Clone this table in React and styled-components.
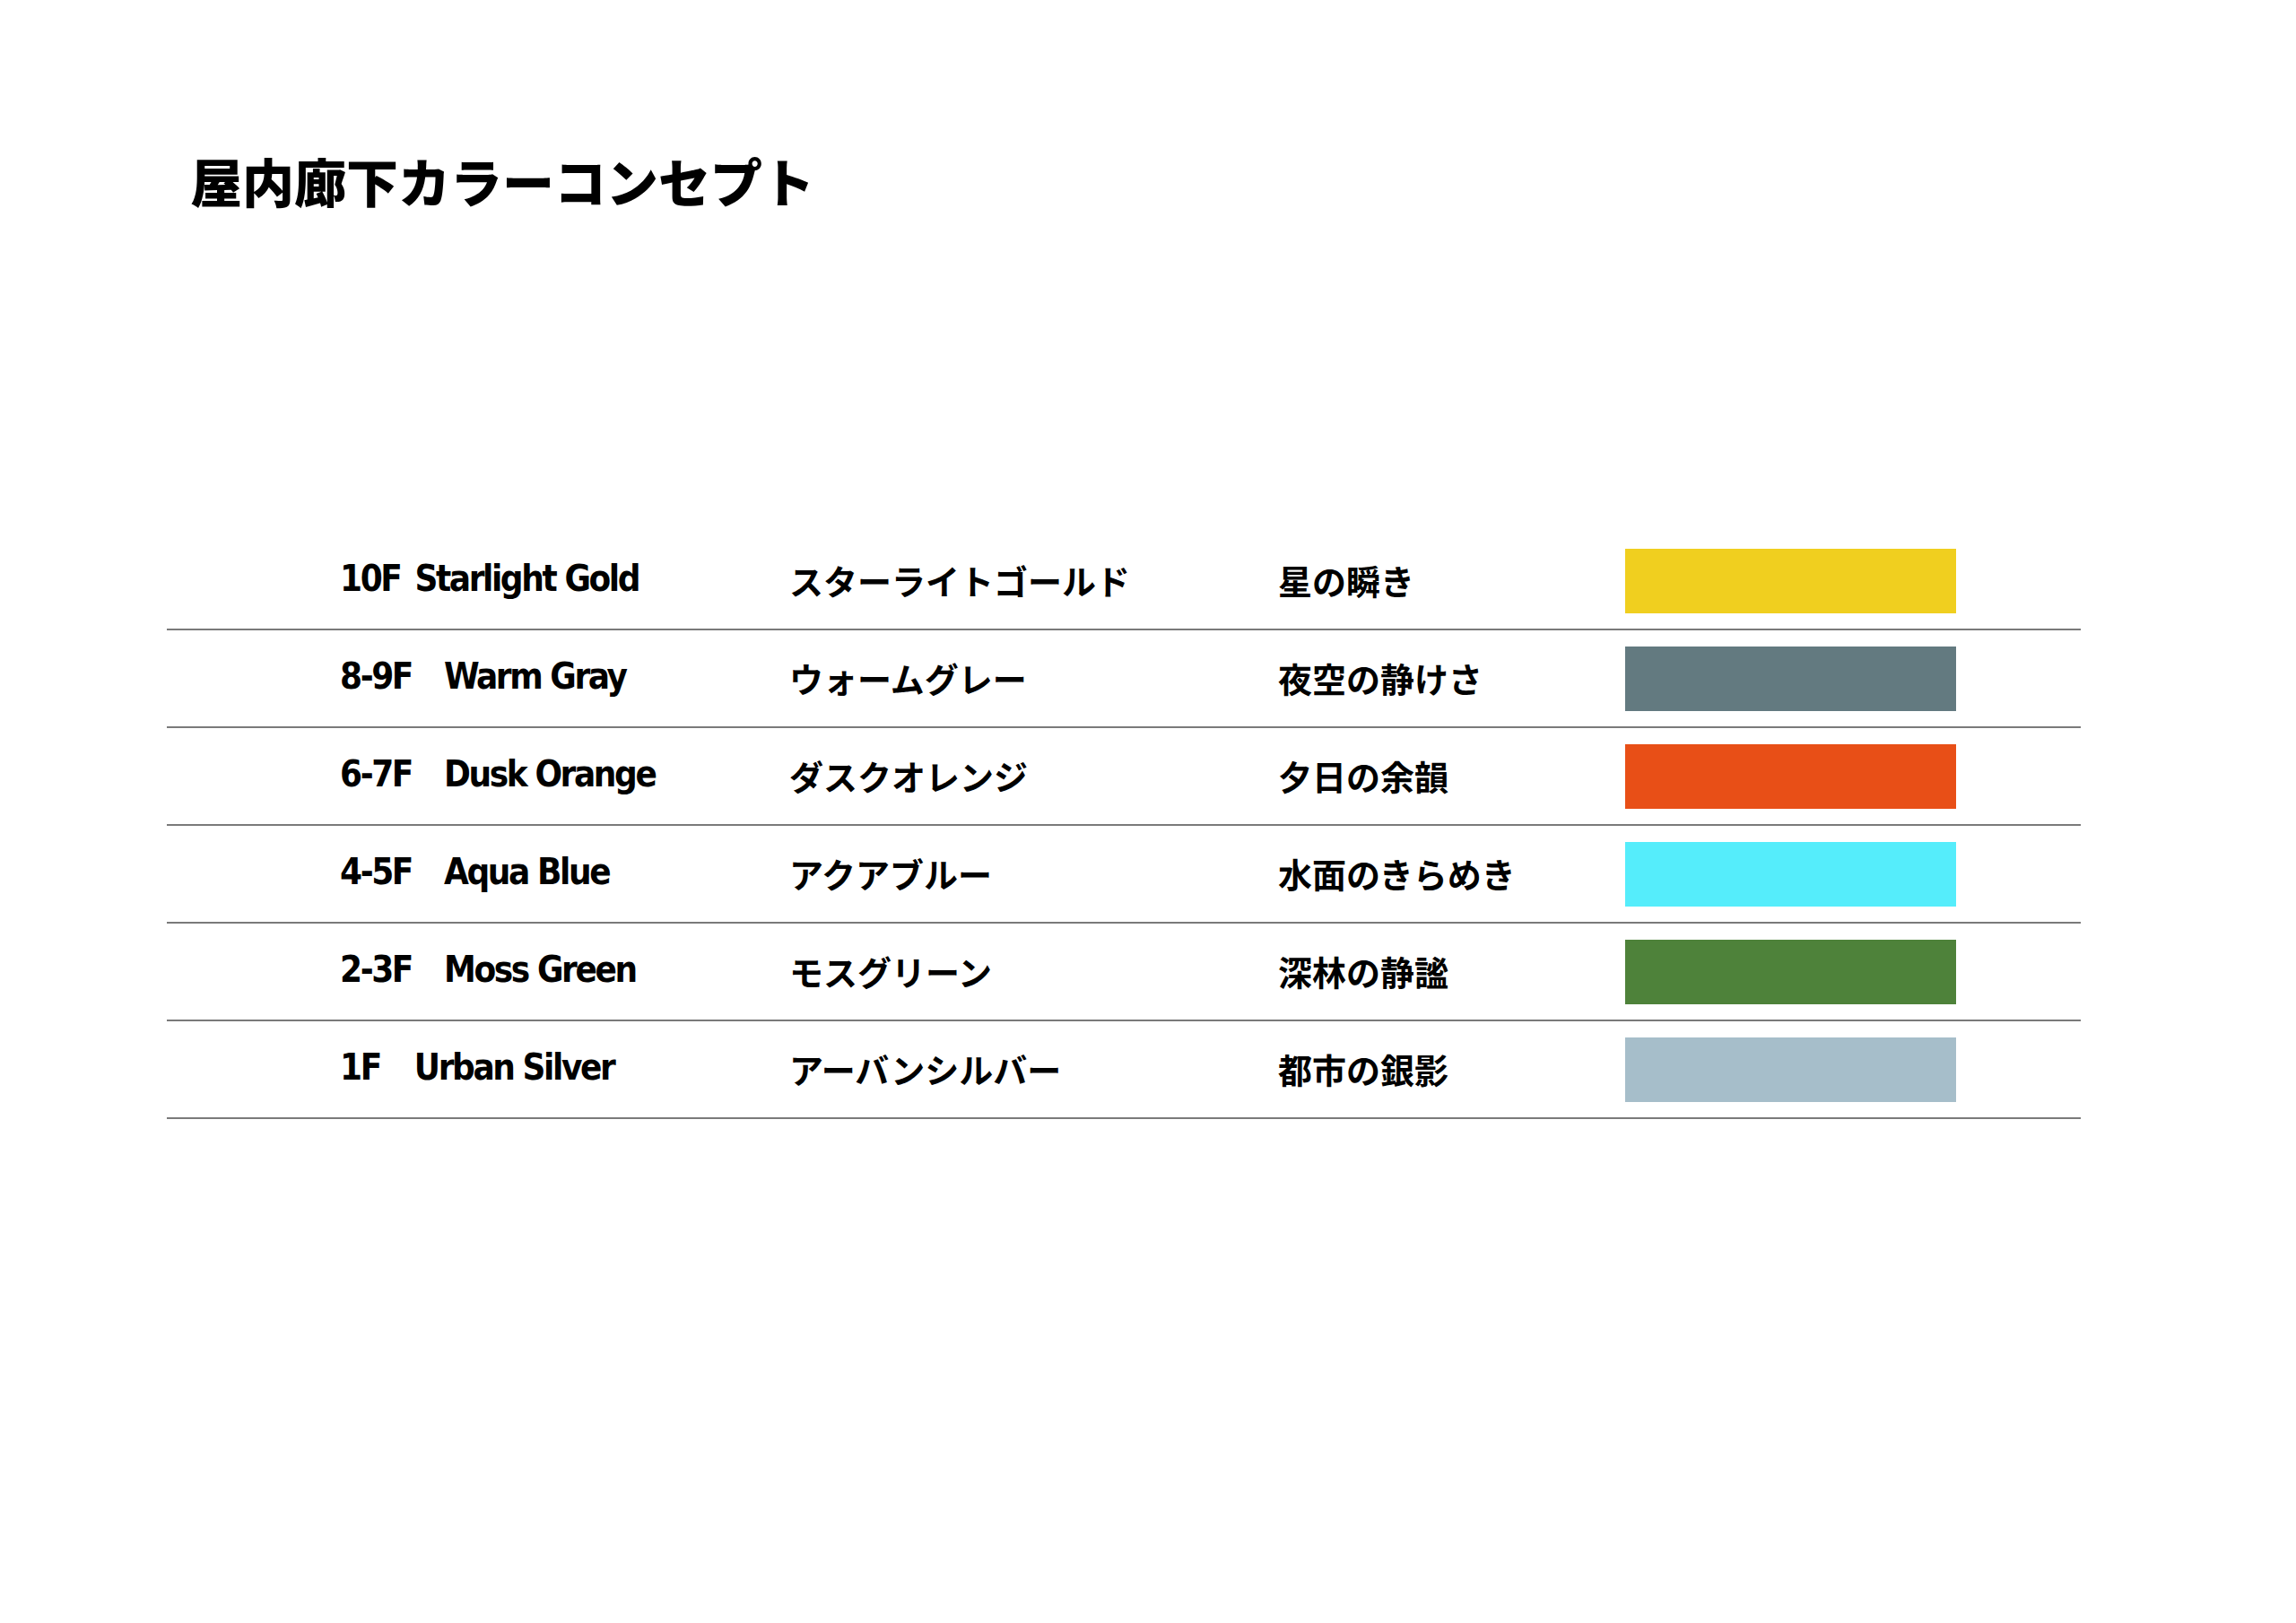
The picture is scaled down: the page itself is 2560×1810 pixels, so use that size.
import React from "react";
import styled, { createGlobalStyle } from "styled-components";

const Global = createGlobalStyle`
  html, body { margin: 0; padding: 0; background: #ffffff; }
  body { font-family: "Noto Sans CJK JP", "Noto Sans", sans-serif; color: #111; }
`;

const Page = styled.div`
  width: 2560px;
  height: 1810px;
  box-sizing: border-box;
  padding: 158px 240px 0 186px;
  background: #fff;
`;

const Title = styled.h1`
  margin: 0 0 0 26px;
  font-family: "Noto Sans CJK JP", sans-serif;
  font-weight: 900;
  font-size: 58px;
  line-height: 86px;
  color: #000;
`;

const Table = styled.div`
  margin-top: 350px;
  width: 2134px;
  display: flex;
  flex-direction: column;
`;

const Row = styled.div`
  display: grid;
  grid-template-columns: 501px 545px 387px 369px 1fr;
  align-items: center;
  height: 109px;
  box-sizing: border-box;
  padding-left: 193px;
  border-bottom: 2px solid #7a7a7a;
`;

const EnName = styled.div`
  font-family: "DejaVu Sans Condensed", "DejaVu Sans", sans-serif;
  font-stretch: condensed;
  font-weight: 700;
  font-size: 40px;
  letter-spacing: -2.4px;
  color: #000;
  white-space: nowrap;
  margin-top: -6px;
`;

const Floor = styled.span`
  display: inline-block;
  margin-right: ${(p) => p.$gap}px;
`;

const JaText = styled.div`
  font-family: "Noto Sans CJK JP", sans-serif;
  font-weight: 700;
  font-size: 38px;
  color: #000;
  white-space: nowrap;
  margin-top: -3px;
`;

const Swatch = styled.div`
  width: 369px;
  height: 72px;
  background: ${(p) => p.$color};
`;

const rows = [
  { floor: "10F", gap: 16, name: "Starlight Gold", kana: "スターライトゴールド", mood: "星の瞬き", color: "#F0CF1F" },
  { floor: "8-9F", gap: 36, name: "Warm Gray", kana: "ウォームグレー", mood: "夜空の静けさ", color: "#637A80" },
  { floor: "6-7F", gap: 36, name: "Dusk Orange", kana: "ダスクオレンジ", mood: "夕日の余韻", color: "#E84F17" },
  { floor: "4-5F", gap: 36, name: "Aqua Blue", kana: "アクアブルー", mood: "水面のきらめき", color: "#55EDFB" },
  { floor: "2-3F", gap: 36, name: "Moss Green", kana: "モスグリーン", mood: "深林の静謐", color: "#4E823A" },
  { floor: "1F", gap: 38, name: "Urban Silver", kana: "アーバンシルバー", mood: "都市の銀影", color: "#A6BECA" },
];

export default function App() {
  return (
    <>
      <Global />
      <Page>
        <Title>屋内廊下カラーコンセプト</Title>
        <Table>
          {rows.map((r) => (
            <Row key={r.floor}>
              <EnName>
                <Floor $gap={r.gap}>{r.floor}</Floor>
                {r.name}
              </EnName>
              <JaText>{r.kana}</JaText>
              <JaText>{r.mood}</JaText>
              <Swatch $color={r.color} />
              <span />
            </Row>
          ))}
        </Table>
      </Page>
    </>
  );
}
